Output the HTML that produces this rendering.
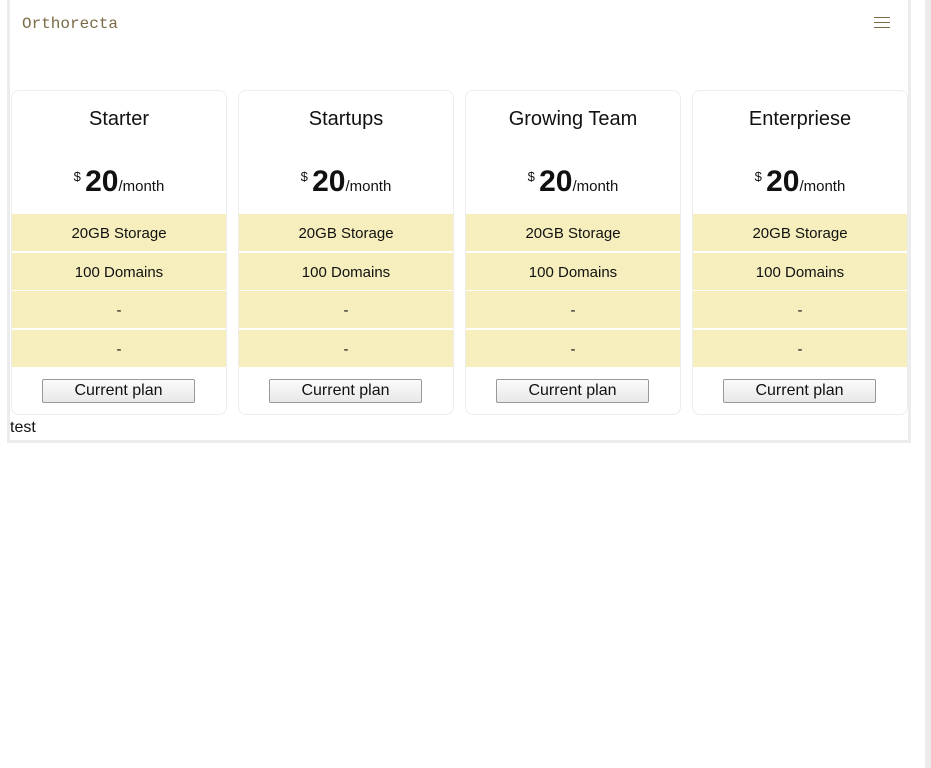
<!DOCTYPE html>
<html><head><style>
*{box-sizing:border-box;margin:0;padding:0}
body{width:931px;height:768px;background:#fff;font-family:"Liberation Sans",sans-serif;position:relative;overflow:hidden;color:#111}
.sb{position:absolute;left:925px;top:0;width:6px;height:768px;background:#ececec}
.wrap{position:absolute;left:7px;top:-2px;width:904px;height:445px;border:3px solid #ececec;border-top:none}
.logo{position:absolute;left:22px;top:15px;font-family:"Liberation Mono",monospace;font-size:16px;color:#7a6a45}
.ham{position:absolute;left:874px;top:17px;width:16px}
.ham i{display:block;height:1px;background:#7a6a45;margin-bottom:4px}
.card{position:absolute;top:90px;width:216px;height:325px;border:1px solid #ededed;border-radius:8px;text-align:center;overflow:hidden}
.t{position:absolute;width:100%;font-size:20px;top:17px}
.p{position:absolute;top:74px;width:100%;font-size:15px}
.p sup{font-size:13px;vertical-align:top;position:relative;top:4px}
.p b{font-size:30px;font-weight:bold}
.r{position:absolute;left:0;width:100%;height:37px;background:#f6efbd;font-size:15px;line-height:39px}
.btn{position:absolute;left:30px;top:288px;width:153px;height:24px;border:1px solid #999;border-radius:2px;background:linear-gradient(#fbfbfb,#e8e8e8);font-size:16px;line-height:22px}
.test{position:absolute;left:10px;top:419px;font-size:16px}
</style></head><body>
<div class="sb"></div>
<div class="wrap"></div>
<div class="logo">Orthorecta</div>
<div class="ham"><i></i><i></i><i></i></div>
<div class="card" style="left:11px"><div class="t">Starter</div><div class="p"><sup>$</sup> <b>20</b>/month</div><div class="r" style="top:123px">20GB Storage</div><div class="r" style="top:162px">100 Domains</div><div class="r" style="top:200px">-</div><div class="r" style="top:239px">-</div><div class="btn">Current plan</div></div>
<div class="card" style="left:238px"><div class="t">Startups</div><div class="p"><sup>$</sup> <b>20</b>/month</div><div class="r" style="top:123px">20GB Storage</div><div class="r" style="top:162px">100 Domains</div><div class="r" style="top:200px">-</div><div class="r" style="top:239px">-</div><div class="btn">Current plan</div></div>
<div class="card" style="left:465px"><div class="t">Growing Team</div><div class="p"><sup>$</sup> <b>20</b>/month</div><div class="r" style="top:123px">20GB Storage</div><div class="r" style="top:162px">100 Domains</div><div class="r" style="top:200px">-</div><div class="r" style="top:239px">-</div><div class="btn">Current plan</div></div>
<div class="card" style="left:692px"><div class="t">Enterpriese</div><div class="p"><sup>$</sup> <b>20</b>/month</div><div class="r" style="top:123px">20GB Storage</div><div class="r" style="top:162px">100 Domains</div><div class="r" style="top:200px">-</div><div class="r" style="top:239px">-</div><div class="btn">Current plan</div></div>
<div class="test">test</div>
</body></html>
